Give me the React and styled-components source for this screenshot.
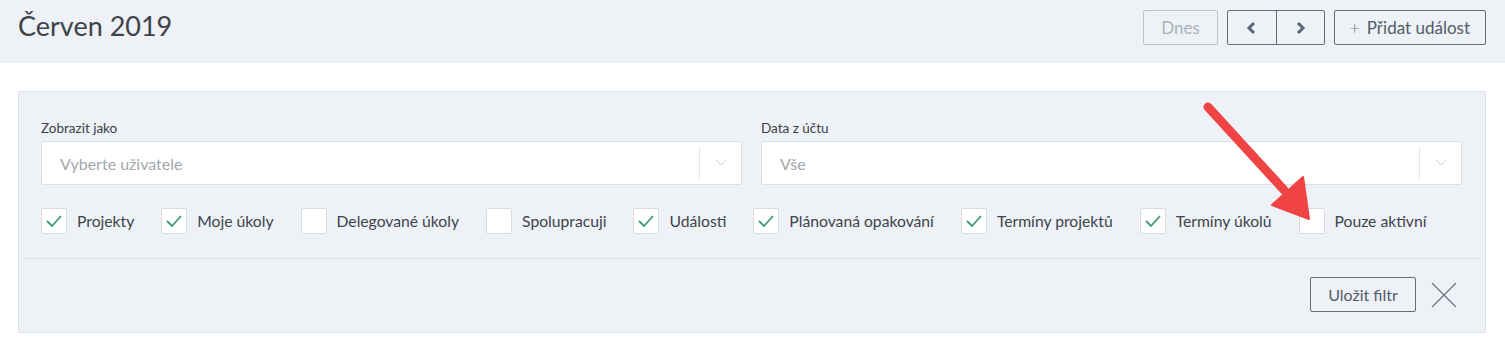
import React from "react";
import styled, { createGlobalStyle } from "styled-components";

const Global = createGlobalStyle`
  html, body { margin: 0; padding: 0; background: #fff; }
  body { font-family: Lato, "Open Sans", sans-serif; color: #3f4650; }
  * { box-sizing: border-box; }
`;

const Page = styled.div`
  width: 1505px;
  height: 357px;
  position: relative;
  overflow: hidden;
`;

const Header = styled.header`
  height: 63px;
  background: #eef1f6;
  display: flex;
  align-items: flex-start;
  justify-content: space-between;
  padding: 10px 19px 0 18px;
`;

const Title = styled.h1`
  margin: 1px 0 0;
  font-size: 27px;
  font-weight: 400;
  color: #3d4249;
  line-height: 30px;
`;

const Actions = styled.div`
  display: flex;
  gap: 9px;
`;

const Btn = styled.button`
  height: 35px;
  padding: 0 ${(p) => p.$px || 16}px;
  background: transparent;
  border: 1px solid ${(p) => (p.$disabled ? "#bcc5cf" : "#5f6c7b")};
  border-radius: 2px;
  color: ${(p) => (p.$disabled ? "#a9b3be" : "#525c6a")};
  font-family: inherit;
  font-size: 17px;
  display: flex;
  align-items: center;
  gap: 9px;
  cursor: pointer;
`;

const Group = styled.div`
  display: flex;
  height: 35px;
  border: 1px solid #5f6c7b;
  border-radius: 2px;
`;

const GroupBtn = styled.button`
  width: 48px;
  background: transparent;
  border: none;
  border-left: ${(p) => (p.$first ? "none" : "1px solid #5f6c7b")};
  display: flex;
  align-items: center;
  justify-content: center;
  padding: 0;
`;

const Plus = styled.span`
  font-size: 17px;
  font-weight: 300;
  color: #6a7482;
  width: 8px;
  text-align: center;
`;

const Main = styled.main`
  padding: 28px 19px 0 18px;
`;

const Panel = styled.section`
  background: #eef1f6;
  border: 1px solid #dde2e8;
  height: 242px;
  display: flex;
  flex-direction: column;
`;

const Top = styled.div`
  padding: 28px 23px 0 22px;
`;

const Fields = styled.div`
  display: grid;
  grid-template-columns: 1fr 1fr;
  gap: 19px;
`;

const Field = styled.div`
  display: flex;
  flex-direction: column;
  gap: 5px;
`;

const Label = styled.label`
  font-size: 13.5px;
  line-height: 16px;
  color: #3a3f46;
`;

const Select = styled.div`
  height: 44px;
  background: #fff;
  border: 1px solid #dbdfe4;
  border-radius: 2px;
  display: flex;
  align-items: center;
`;

const Value = styled.span`
  flex: 1;
  padding-left: 18px;
  font-size: 16px;
  color: #a3a7ad;
`;

const Indicator = styled.span`
  height: 34px;
  width: 42px;
  border-left: 1px solid #e3e5e8;
  display: flex;
  align-items: center;
  justify-content: center;
`;

const Checks = styled.div`
  display: flex;
  align-items: center;
  gap: 27px;
  margin-top: 22px;
  height: 28px;
`;

const CheckItem = styled.label`
  display: flex;
  align-items: center;
  gap: 10px;
  font-size: 15.7px;
  color: #3d434b;
`;

const Box = styled.span`
  width: 26px;
  height: 26px;
  background: #fff;
  border: 1px solid #d8dce1;
  border-radius: 2px;
  display: flex;
  align-items: center;
  justify-content: center;
`;

const Divider = styled.hr`
  margin: 23px 5px 0 5px;
  border: none;
  border-top: 1px solid #dde1e6;
`;

const Footer = styled.div`
  display: flex;
  justify-content: flex-end;
  align-items: center;
  gap: 15px;
  padding: 18px 28px 0 0;
`;

const SaveBtn = styled.button`
  height: 35px;
  width: 106px;
  background: transparent;
  border: 1px solid #5f6c7b;
  border-radius: 2px;
  color: #525c6a;
  font-family: inherit;
  font-size: 16px;
`;

const Arrow = styled.svg`
  position: absolute;
  left: 0;
  top: 0;
  pointer-events: none;
`;

const Check = () => (
  <svg width="18" height="14" viewBox="0 0 18 14">
    <polyline points="2,7 7,12 16,2" fill="none" stroke="#3d9a6f" strokeWidth="1.8" />
  </svg>
);

const Chevron = ({ dir }) => (
  <svg width="12" height="14" viewBox="0 0 12 14">
    <polyline
      points={dir === "left" ? "8,2 3,7 8,12" : "4,2 9,7 4,12"}
      fill="none"
      stroke="#5a6878"
      strokeWidth="3"
    />
  </svg>
);

const SmallChevron = () => (
  <svg width="12" height="8" viewBox="0 0 12 8">
    <polyline points="1,1 6,6 11,1" fill="none" stroke="#cdd0d4" strokeWidth="1" />
  </svg>
);

const items = [
  ["Projekty", true],
  ["Moje úkoly", true],
  ["Delegované úkoly", false],
  ["Spolupracuji", false],
  ["Události", true],
  ["Plánovaná opakování", true],
  ["Termíny projektů", true],
  ["Termíny úkolů", true],
  ["Pouze aktivní", false],
];

export default function App() {
  return (
    <Page>
      <Global />
      <Header>
        <Title>Červen 2019</Title>
        <Actions>
          <Btn $disabled $px={17}>Dnes</Btn>
          <Group>
            <GroupBtn $first><Chevron dir="left" /></GroupBtn>
            <GroupBtn><Chevron dir="right" /></GroupBtn>
          </Group>
          <Btn $px={15}>
            <Plus>+</Plus>
            Přidat událost
          </Btn>
        </Actions>
      </Header>
      <Main>
        <Panel>
          <Top>
            <Fields>
              <Field>
                <Label>Zobrazit jako</Label>
                <Select>
                  <Value>Vyberte uživatele</Value>
                  <Indicator><SmallChevron /></Indicator>
                </Select>
              </Field>
              <Field>
                <Label>Data z účtu</Label>
                <Select>
                  <Value>Vše</Value>
                  <Indicator><SmallChevron /></Indicator>
                </Select>
              </Field>
            </Fields>
            <Checks>
              {items.map(([label, checked]) => (
                <CheckItem key={label}>
                  <Box>{checked && <Check />}</Box>
                  {label}
                </CheckItem>
              ))}
            </Checks>
          </Top>
          <Divider />
          <Footer>
            <SaveBtn>Uložit filtr</SaveBtn>
            <svg width="26" height="26" viewBox="0 0 26 26">
              <path d="M1 1 L25 25 M25 1 L1 25" stroke="#6b7684" strokeWidth="1.3" />
            </svg>
          </Footer>
        </Panel>
      </Main>
      <Arrow width="1505" height="357" viewBox="0 0 1505 357">
        <line x1="1208" y1="107" x2="1284" y2="190" stroke="#f04343" strokeWidth="9" strokeLinecap="round" />
        <polygon points="1272,205 1303,177 1309,219" fill="#f04343" strokeLinejoin="round" stroke="#f04343" strokeWidth="2" />
      </Arrow>
    </Page>
  );
}
